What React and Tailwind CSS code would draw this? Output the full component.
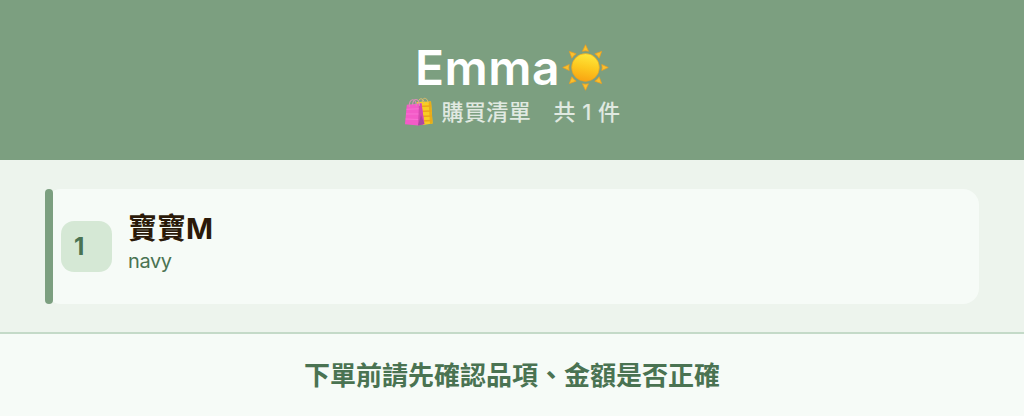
import React from "react";

const items = [{ id: 1, name: "寶寶M", variant: "navy" }];

const SunIcon = ({ className }) => (
  <svg viewBox="0 0 46 46" className={className} aria-hidden="true">
    <defs>
      <linearGradient id="sunDisc" x1="0.6" y1="0" x2="0.4" y2="1">
        <stop offset="0" stopColor="#ffe93c" />
        <stop offset="0.5" stopColor="#fdc91f" />
        <stop offset="1" stopColor="#f9a312" />
      </linearGradient>
    </defs>
    {[0, 45, 90, 135, 180, 225, 270, 315].map((angle) => (
      <path
        key={angle}
        d="M23 .7 26 7.1Q23 6.3 20 7.1Z"
        fill="#fbc02c"
        stroke="#eb9e1f"
        strokeWidth="0.7"
        strokeLinejoin="round"
        transform={`rotate(${angle} 23 23)`}
      />
    ))}
    <circle cx="23" cy="23" r="13.6" fill="url(#sunDisc)" stroke="#eda01c" strokeWidth="0.6" />
  </svg>
);

const BagsIcon = ({ className }) => (
  <svg viewBox="0 0 30 30" className={className} aria-hidden="true">
    {/* yellow bag */}
    <path d="M12.5 5 27 4.5 28.6 26.5 19 28Z" fill="#f8cd22" />
    <path d="M24.6 4.6 27 4.5 28.6 26.5 26 27Z" fill="#e8ae17" />
    <path
      d="M13 9.5 27.3 9M14 14.5 27.7 14M15 19.5 28 19M17 24 28.3 23.5"
      stroke="#eca51b"
      strokeWidth="1.3"
    />
    <path
      d="M14.2 7C13.8 0 20 .2 20.4 6.5M18.2 5C18.3-.3 23.6.2 24.2 6"
      fill="none"
      stroke="#dfbd68"
      strokeWidth="1"
    />
    {/* pink bag */}
    <path d="M2.8 7.7 17.5 6.2 20.3 27 14 28.5 1 27.2Z" fill="#f45bc8" />
    <path d="M15 6.5 17.5 6.2 20.4 27 14 28.5Z" fill="#d149ae" />
    <path d="M17 18 20.4 27 14 28.5Z" fill="#a947a2" />
    <path
      d="M2.5 12.3 14.8 11.8M2.1 17 14.5 17M1.6 22 14.2 22.5"
      stroke="#fa78d6"
      strokeWidth="0.8"
    />
    <path
      d="M5.2 10C5 1 12 0 12.4 8.8M8.5 8C9 0 15.3 1 15.6 8.7"
      fill="none"
      stroke="#d690b6"
      strokeWidth="1.1"
    />
  </svg>
);

const ListItem = ({ index, item }) => (
  <li className="flex h-[115px] rounded-2xl bg-[#f6fbf7]">
    <div className="w-2 rounded-full bg-[#7c9f80]" />
    <div className="ml-2 flex items-center">
      <div className="flex h-[51px] w-[51px] items-center rounded-[13px] bg-[#d5e8d5] pl-[13px] text-[24px] font-bold text-[#4a7352]">
        {index}
      </div>
    </div>
    <div className="ml-4 pt-[22px]">
      <div className="text-[29px] leading-[36px] font-bold text-[#2b1a09]">
        {item.name}
      </div>
      <div className="text-[20px] leading-[29px] tracking-[-0.4px] text-[#4a7352]">
        {item.variant}
      </div>
    </div>
  </li>
);

const App = () => {
  return (
    <div className="flex h-[416px] w-[1024px] flex-col overflow-hidden bg-[#edf4ed] font-['Inter','Noto_Sans_CJK_TC',sans-serif]">
      <header className="flex h-40 flex-col items-center bg-[#7c9f80] pt-10">
        <h1 className="flex items-center text-[48px] leading-[56px] font-semibold tracking-[0.5px] text-white">
          Emma
          <SunIcon className="mb-0.5 ml-0.5 h-[47px] w-[47px]" />
        </h1>
        <p className="flex items-center text-[22px] leading-[32px] text-[#e0e9e1]">
          <BagsIcon className="mr-2 h-[30px] w-[30px]" />
          <span className="font-medium tracking-[0.4px]">購買清單　共 1 件</span>
        </p>
      </header>

      <ul className="h-[172px] pt-[29px] pr-[45px] pl-[45px]">
        {items.map((item, i) => (
          <ListItem key={item.id} index={i + 1} item={item} />
        ))}
      </ul>

      <footer className="flex flex-1 items-center justify-center border-t-2 border-[#c4dac8] bg-[#f6fbf7] text-[26px] font-bold text-[#4a7352]">
        下單前請先確認品項、金額是否正確
      </footer>
    </div>
  );
};

export default App;
